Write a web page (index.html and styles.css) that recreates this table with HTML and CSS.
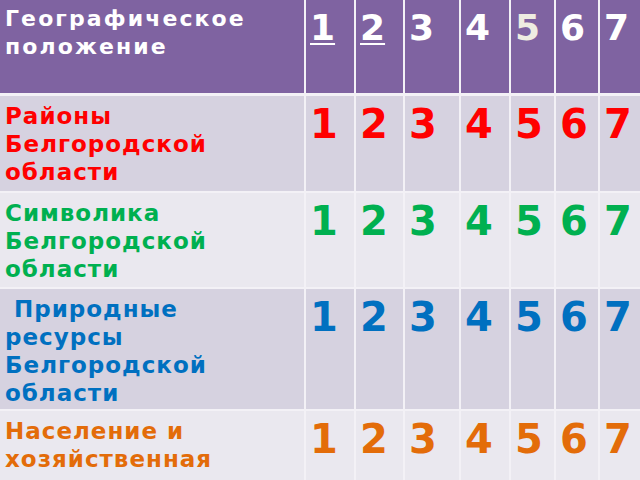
FILE: index.html
```html
<!DOCTYPE html>
<html lang="ru">
<head>
<meta charset="utf-8">
<title>Белгородская область</title>
<link rel="stylesheet" href="styles.css">
</head>
<body>
<div class="grid">
  <div class="cell head label">Географическое<br>положение</div>
  <div class="cell head num"><u>1</u></div>
  <div class="cell head num"><u>2</u></div>
  <div class="cell head num">3</div>
  <div class="cell head num">4</div>
  <div class="cell head num beige">5</div>
  <div class="cell head num">6</div>
  <div class="cell head num">7</div>

  <div class="cell r1 label red">Районы<br>Белгородской<br>области</div>
  <div class="cell r1 num red">1</div>
  <div class="cell r1 num red">2</div>
  <div class="cell r1 num red">3</div>
  <div class="cell r1 num red">4</div>
  <div class="cell r1 num red">5</div>
  <div class="cell r1 num red">6</div>
  <div class="cell r1 num red">7</div>

  <div class="cell r2 label green">Символика<br>Белгородской<br>области</div>
  <div class="cell r2 num green">1</div>
  <div class="cell r2 num green">2</div>
  <div class="cell r2 num green">3</div>
  <div class="cell r2 num green">4</div>
  <div class="cell r2 num green">5</div>
  <div class="cell r2 num green">6</div>
  <div class="cell r2 num green">7</div>

  <div class="cell r1 label blue">&nbsp;Природные<br>ресурсы<br>Белгородской<br>области</div>
  <div class="cell r1 num blue">1</div>
  <div class="cell r1 num blue">2</div>
  <div class="cell r1 num blue">3</div>
  <div class="cell r1 num blue">4</div>
  <div class="cell r1 num blue">5</div>
  <div class="cell r1 num blue">6</div>
  <div class="cell r1 num blue">7</div>

  <div class="cell r2 label orange">Население и<br>хозяйственная<br>деятельность</div>
  <div class="cell r2 num orange">1</div>
  <div class="cell r2 num orange">2</div>
  <div class="cell r2 num orange">3</div>
  <div class="cell r2 num orange">4</div>
  <div class="cell r2 num orange">5</div>
  <div class="cell r2 num orange">6</div>
  <div class="cell r2 num orange">7</div>
</div>
</body>
</html>
```

FILE: styles.css
```css
html, body {
  margin: 0;
  padding: 0;
  width: 640px;
  height: 480px;
  overflow: hidden;
  background: #eae8ef;
}

.grid {
  display: grid;
  width: 644px;
  grid-template-columns: 304px 48px 47px 54px 48px 43px 42px 44px;
  grid-template-rows: 94px 95px 94px 120px 120px;
  column-gap: 2px;
  row-gap: 2px;
  background: #f3f1f6;
  font-family: "DejaVu Sans", "Noto Sans", sans-serif;
  font-weight: bold;
}

.cell {
  padding: 5px 4px 0 4px;
  overflow: hidden;
}

.label {
  font-size: 23px;
  line-height: 28px;
  letter-spacing: 1px;
  padding-left: 5px;
  padding-top: 6px;
  white-space: nowrap;
}

.num {
  font-size: 40px;
  line-height: 47px;
}

.head {
  background: #7f63a1;
  color: #ffffff;
  border-bottom: 1px solid #f3f1f6;
}

.head.label {
  font-size: 22px;
  letter-spacing: 2.1px;
  padding-top: 5px;
}

.head.num {
  font-size: 36px;
  line-height: 42px;
  padding-top: 7px;
}

.head u {
  text-decoration-thickness: 2px;
  text-underline-offset: 3px;
}

.beige { color: #eeece1; }

.r1 { background: #d6d2e0; }
.r2 { background: #eae8ef; }

.red { color: #ff0000; }
.green { color: #00b050; }
.blue { color: #0070c0; }
.orange { color: #e36c09; }
```
